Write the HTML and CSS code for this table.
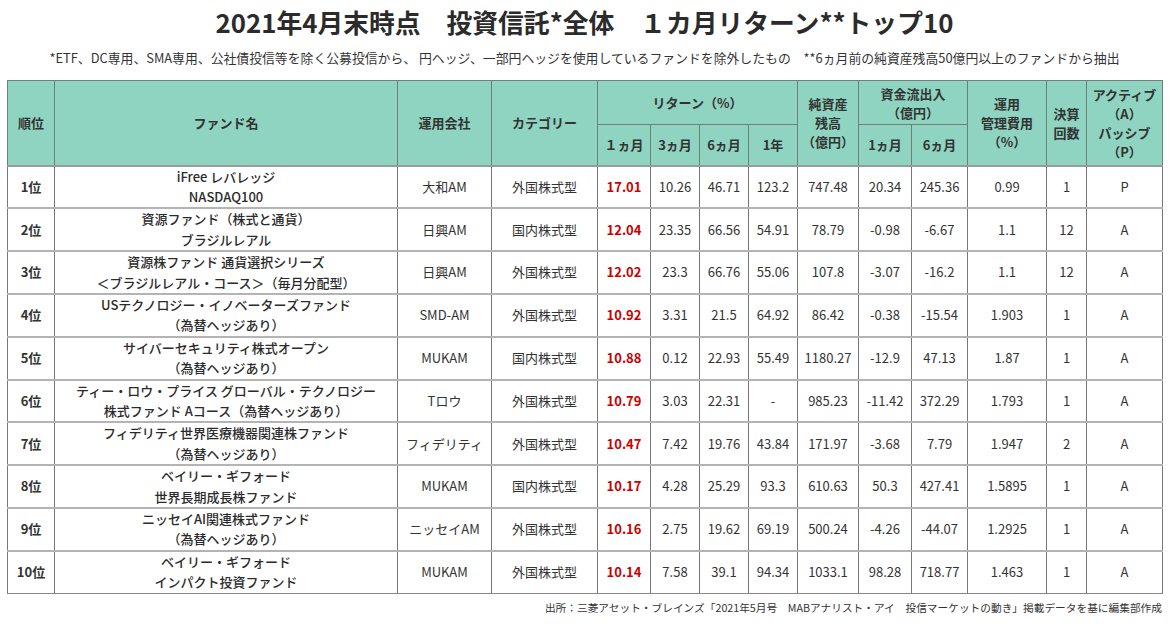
FILE: index.html
```html
<!DOCTYPE html>
<html lang="ja">
<head>
<meta charset="utf-8">
<link rel="stylesheet" href="styles.css">
</head>
<body>
<div class="page">
  <h1 class="title">2021年4月末時点　投資信託*全体　１カ月リターン**トップ10</h1>
  <p class="note">*ETF、DC専用、SMA専用、公社債投信等を除く公募投信から、 円ヘッジ、一部円ヘッジを使用しているファンドを除外したもの　**6ヵ月前の純資産残高50億円以上のファンドから抽出</p>
  <table class="rank">
    <colgroup>
      <col class="c-rank"><col class="c-name"><col class="c-co"><col class="c-cat">
      <col class="c-r1"><col class="c-r3"><col class="c-r6"><col class="c-ry">
      <col class="c-nav"><col class="c-f1"><col class="c-f6"><col class="c-fee">
      <col class="c-set"><col class="c-ap">
    </colgroup>
    <thead>
      <tr class="h1">
        <th rowspan="2">順位</th>
        <th rowspan="2">ファンド名</th>
        <th rowspan="2">運用会社</th>
        <th rowspan="2">カテゴリー</th>
        <th colspan="4">リターン（%）</th>
        <th rowspan="2">純資産<br>残高<br>（億円）</th>
        <th colspan="2">資金流出入<br>（億円）</th>
        <th rowspan="2">運用<br>管理費用<br>（%）</th>
        <th rowspan="2">決算<br>回数</th>
        <th rowspan="2">アクティブ<br>（A）<br>パッシブ<br>（P）</th>
      </tr>
      <tr class="h2">
        <th>１ヵ月</th><th>3ヵ月</th><th>6ヵ月</th><th>1年</th>
        <th>1ヵ月</th><th>6ヵ月</th>
      </tr>
    </thead>
    <tbody>
      <tr><td class="rk">1位</td><td class="nm">iFree レバレッジ<br>NASDAQ100</td><td>大和AM</td><td>外国株式型</td><td class="red">17.01</td><td>10.26</td><td>46.71</td><td>123.2</td><td>747.48</td><td>20.34</td><td>245.36</td><td>0.99</td><td>1</td><td>P</td></tr>
      <tr><td class="rk">2位</td><td class="nm">資源ファンド（株式と通貨）<br>ブラジルレアル</td><td>日興AM</td><td>国内株式型</td><td class="red">12.04</td><td>23.35</td><td>66.56</td><td>54.91</td><td>78.79</td><td>-0.98</td><td>-6.67</td><td>1.1</td><td>12</td><td>A</td></tr>
      <tr><td class="rk">3位</td><td class="nm">資源株ファンド 通貨選択シリーズ<br>＜ブラジルレアル・コース＞（毎月分配型）</td><td>日興AM</td><td>外国株式型</td><td class="red">12.02</td><td>23.3</td><td>66.76</td><td>55.06</td><td>107.8</td><td>-3.07</td><td>-16.2</td><td>1.1</td><td>12</td><td>A</td></tr>
      <tr><td class="rk">4位</td><td class="nm">USテクノロジー・イノベーターズファンド<br>（為替ヘッジあり）</td><td>SMD-AM</td><td>外国株式型</td><td class="red">10.92</td><td>3.31</td><td>21.5</td><td>64.92</td><td>86.42</td><td>-0.38</td><td>-15.54</td><td>1.903</td><td>1</td><td>A</td></tr>
      <tr><td class="rk">5位</td><td class="nm">サイバーセキュリティ株式オープン<br>（為替ヘッジあり）</td><td>MUKAM</td><td>国内株式型</td><td class="red">10.88</td><td>0.12</td><td>22.93</td><td>55.49</td><td>1180.27</td><td>-12.9</td><td>47.13</td><td>1.87</td><td>1</td><td>A</td></tr>
      <tr><td class="rk">6位</td><td class="nm">ティー・ロウ・プライス グローバル・テクノロジー<br>株式ファンド Aコース（為替ヘッジあり）</td><td>Tロウ</td><td>外国株式型</td><td class="red">10.79</td><td>3.03</td><td>22.31</td><td>-</td><td>985.23</td><td>-11.42</td><td>372.29</td><td>1.793</td><td>1</td><td>A</td></tr>
      <tr><td class="rk">7位</td><td class="nm">フィデリティ世界医療機器関連株ファンド<br>（為替ヘッジあり）</td><td>フィデリティ</td><td>外国株式型</td><td class="red">10.47</td><td>7.42</td><td>19.76</td><td>43.84</td><td>171.97</td><td>-3.68</td><td>7.79</td><td>1.947</td><td>2</td><td>A</td></tr>
      <tr><td class="rk">8位</td><td class="nm">ベイリー・ギフォード<br>世界長期成長株ファンド</td><td>MUKAM</td><td>国内株式型</td><td class="red">10.17</td><td>4.28</td><td>25.29</td><td>93.3</td><td>610.63</td><td>50.3</td><td>427.41</td><td>1.5895</td><td>1</td><td>A</td></tr>
      <tr><td class="rk">9位</td><td class="nm">ニッセイAI関連株式ファンド<br>（為替ヘッジあり）</td><td>ニッセイAM</td><td>外国株式型</td><td class="red">10.16</td><td>2.75</td><td>19.62</td><td>69.19</td><td>500.24</td><td>-4.26</td><td>-44.07</td><td>1.2925</td><td>1</td><td>A</td></tr>
      <tr><td class="rk">10位</td><td class="nm">ベイリー・ギフォード<br>インパクト投資ファンド</td><td>MUKAM</td><td>外国株式型</td><td class="red">10.14</td><td>7.58</td><td>39.1</td><td>94.34</td><td>1033.1</td><td>98.28</td><td>718.77</td><td>1.463</td><td>1</td><td>A</td></tr>
    </tbody>
  </table>
  <p class="source">出所：三菱アセット・ブレインズ「2021年5月号　MABアナリスト・アイ　投信マーケットの動き」掲載データを基に編集部作成</p>
</div>
</body>
</html>
```

FILE: styles.css
```css
html, body {
  margin: 0;
  padding: 0;
  background: #ffffff;
}
body {
  font-family: "Noto Sans CJK JP", "Noto Sans", sans-serif;
  color: #333333;
}
.page {
  width: 1170px;
  height: 626px;
  padding: 0 8px 0 7px;
  box-sizing: border-box;
  display: flex;
  flex-direction: column;
}
.title {
  margin: 5px 0 0 0;
  font-size: 25.8px;
  line-height: 34px;
  font-weight: 700;
  text-align: center;
  color: #2b2b2b;
}
.note {
  margin: 10px 0 0 0;
  font-size: 12.85px;
  line-height: 18px;
  text-align: center;
  color: #333;
}
.rank {
  margin-top: 13px;
  width: 1155px;
  border-collapse: collapse;
  table-layout: fixed;
  font-size: 13px;
}
.c-rank { width: 47px; }
.c-name { width: 343px; }
.c-co { width: 94px; }
.c-cat { width: 106px; }
.c-r1 { width: 53px; }
.c-r3 { width: 49px; }
.c-r6 { width: 49px; }
.c-ry { width: 49px; }
.c-nav { width: 61px; }
.c-f1 { width: 53px; }
.c-f6 { width: 56px; }
.c-fee { width: 79px; }
.c-set { width: 40px; }
.c-ap { width: 76px; }

.rank th {
  background: #8fd3c1;
  font-weight: 700;
  color: #333;
  border: 1px solid #6f7f7a;
  padding: 0;
  line-height: 19px;
  text-align: center;
  vertical-align: middle;
}
.rank thead tr.h1 { height: 44px; }
.rank thead tr.h2 { height: 41px; }
.rank thead tr.h2 th { border-bottom: 2px solid #9a9a9a; }
.rank thead tr.h1 th[rowspan] { border-bottom: 2px solid #9a9a9a; }

.rank td {
  height: 40.8px;
  padding: 0;
  border-left: 1px solid #777;
  border-right: 1px solid #777;
  border-top: 2px solid #b4b4b4;
  border-bottom: 2px solid #b4b4b4;
  text-align: center;
  vertical-align: middle;
  line-height: 20.4px;
  color: #333;
}
.rank tbody tr:first-child td { border-top: 2px solid #9a9a9a; }
.rank tbody tr:last-child td { border-bottom: 1px solid #888; }
.rank td.rk { font-weight: 700; }
.rank td.nm { font-weight: 500; color: #2b2b2b; }
.rank td.red { color: #cc0000; font-weight: 700; }

.source {
  margin: 6px 0 0 0;
  font-size: 10.7px;
  line-height: 16px;
  text-align: right;
  color: #333;
}
```
